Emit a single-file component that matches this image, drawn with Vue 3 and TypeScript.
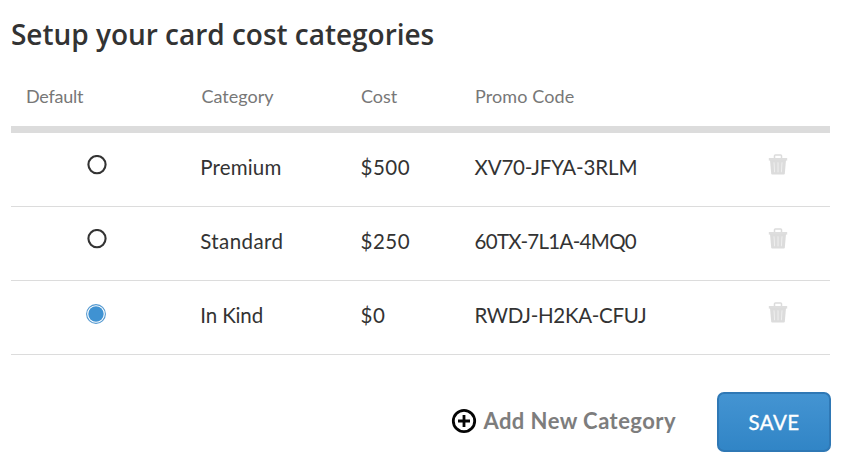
<script setup lang="ts">
import { ref } from 'vue'

interface Category {
  id: string
  name: string
  cost: string
  code: string
}

const categories: Category[] = [
  { id: 'premium', name: 'Premium', cost: '$500', code: 'XV70-JFYA-3RLM' },
  { id: 'standard', name: 'Standard', cost: '$250', code: '60TX-7L1A-4MQ0' },
  { id: 'in-kind', name: 'In Kind', cost: '$0', code: 'RWDJ-H2KA-CFUJ' },
]
const selected = ref('in-kind')
</script>

<template>
  <main class="panel">
    <h1>Setup your card cost categories</h1>
    <section class="table">
      <div class="head line">
        <span class="h-default">Default</span>
        <span class="h-category">Category</span>
        <span class="h-cost">Cost</span>
        <span class="h-code">Promo Code</span>
      </div>
      <div v-for="c in categories" :key="c.id" class="row line">
        <button class="radio" type="button" @click="selected = c.id">
          <svg v-if="selected !== c.id" width="20" height="20" viewBox="0 0 20 20">
            <circle cx="10" cy="9.6" r="8.6" fill="#fff" stroke="#333" stroke-width="2.1" />
          </svg>
          <svg v-else class="checked" width="20" height="20" viewBox="0 0 20 20">
            <circle cx="10" cy="10" r="9.4" fill="#fff" stroke="#5499d0" stroke-width="1.1" />
            <circle cx="10" cy="10" r="7.7" fill="#3f92d2" />
          </svg>
        </button>
        <span :class="['name', c.id]">{{ c.name }}</span>
        <span class="cost">{{ c.cost }}</span>
        <span :class="['code', 'code-' + c.id]">{{ c.code }}</span>
        <button class="trash" type="button">
          <svg width="20" height="22" viewBox="0 0 20 22">
            <path d="M6.5 4V1.8Q6.5 1 7.3 1h5.4q.8 0 .8.8V4" fill="none" stroke="#dcdcdc" stroke-width="1.5" />
            <path d="M.8 4h18.4v2.6H.8z" fill="#dedede" />
            <path d="M2 6h16l-1.2 13.7q-.1.8-.9.8H4.1q-.8 0-.9-.8z" fill="#dcdcdc" />
            <path d="M6 8.3l.6 10M10 8.3v10M14 8.3l-.6 10" stroke="#efefef" stroke-width="1" />
          </svg>
        </button>
      </div>
    </section>
    <footer class="actions">
      <button class="add" type="button">
        <svg width="26" height="26" viewBox="0 0 26 26">
          <circle cx="13" cy="13" r="10.7" fill="#fff" stroke="#050505" stroke-width="2.8" />
          <path d="M13 7v12M7 13h12" stroke="#050505" stroke-width="2.8" />
        </svg>
        <span>Add New Category</span>
      </button>
      <button class="save" type="button"><span>SAVE</span></button>
    </footer>
  </main>
</template>

<style>
body {
  background: #fff;
}
</style>

<style scoped>
.panel {
  box-sizing: border-box;
  width: 857px;
  height: 468px;
  padding: 14px 27px 0 11px;
  overflow: hidden;
  font-family: Lato, "Liberation Sans", sans-serif;
  color: #333;
}
h1 {
  margin: 0;
  height: 54px;
  font: 600 28px/40px "Open Sans", sans-serif;
  letter-spacing: -0.02px;
  white-space: nowrap;
}
button {
  padding: 0;
  border: 0;
  background: none;
  font: inherit;
  cursor: pointer;
}
svg {
  display: block;
}
.line {
  display: grid;
  grid-template-columns: 190px 160px 114px 284px 71px;
  box-sizing: border-box;
  white-space: nowrap;
}
.head {
  height: 65px;
  padding-top: 16px;
  border-bottom: 7px solid #dcdcdc;
  color: #777;
  font-size: 18px;
  line-height: 24px;
}
.h-default {
  padding-left: 15px;
  letter-spacing: -0.25px;
}
.h-category {
  padding-left: 0.5px;
}
.h-code {
  letter-spacing: 0.1px;
}
.row {
  height: 74px;
  border-bottom: 1px solid #dcdcdc;
  font-size: 20.5px;
  line-height: 69px;
}
.name {
  margin-left: -0.7px;
}
.premium {
  letter-spacing: 0.15px;
}
.standard {
  letter-spacing: 0.4px;
}
.in-kind {
  letter-spacing: -0.15px;
}
.cost {
  letter-spacing: 0.5px;
  margin-left: -0.5px;
}
.code {
  margin-left: -0.5px;
}
.code-premium {
  letter-spacing: -0.15px;
}
.code-standard {
  letter-spacing: -0.7px;
}
.code-in-kind {
  letter-spacing: -0.3px;
}
.radio {
  align-self: start;
  margin: 22px 0 0 76px;
  width: 20px;
}
.checked {
  position: relative;
  top: 1px;
  left: -1px;
}
.trash {
  align-self: start;
  margin: 21px 0 0 9px;
  width: 20px;
}
.actions {
  display: flex;
  justify-content: flex-end;
  align-items: center;
  height: 60px;
  margin: 37px -1px 0 0;
}
.add {
  display: flex;
  align-items: center;
  gap: 6px;
  margin-right: 41px;
  color: #7d7d7d;
  font-size: 22px;
  font-weight: 700;
  line-height: 30px;
  letter-spacing: 0.45px;
  white-space: nowrap;
}
.add svg {
  position: relative;
  top: -1px;
}
.add span {
  position: relative;
  top: -1px;
}
.save {
  box-sizing: border-box;
  width: 114px;
  height: 60px;
  border: 2px solid #2f78b5;
  border-radius: 7px;
  background: linear-gradient(#4494d2, #3185c6);
  color: #fff;
  font-size: 20.5px;
  -webkit-text-stroke: 0.35px #fff;
  letter-spacing: 0.4px;
}
</style>
